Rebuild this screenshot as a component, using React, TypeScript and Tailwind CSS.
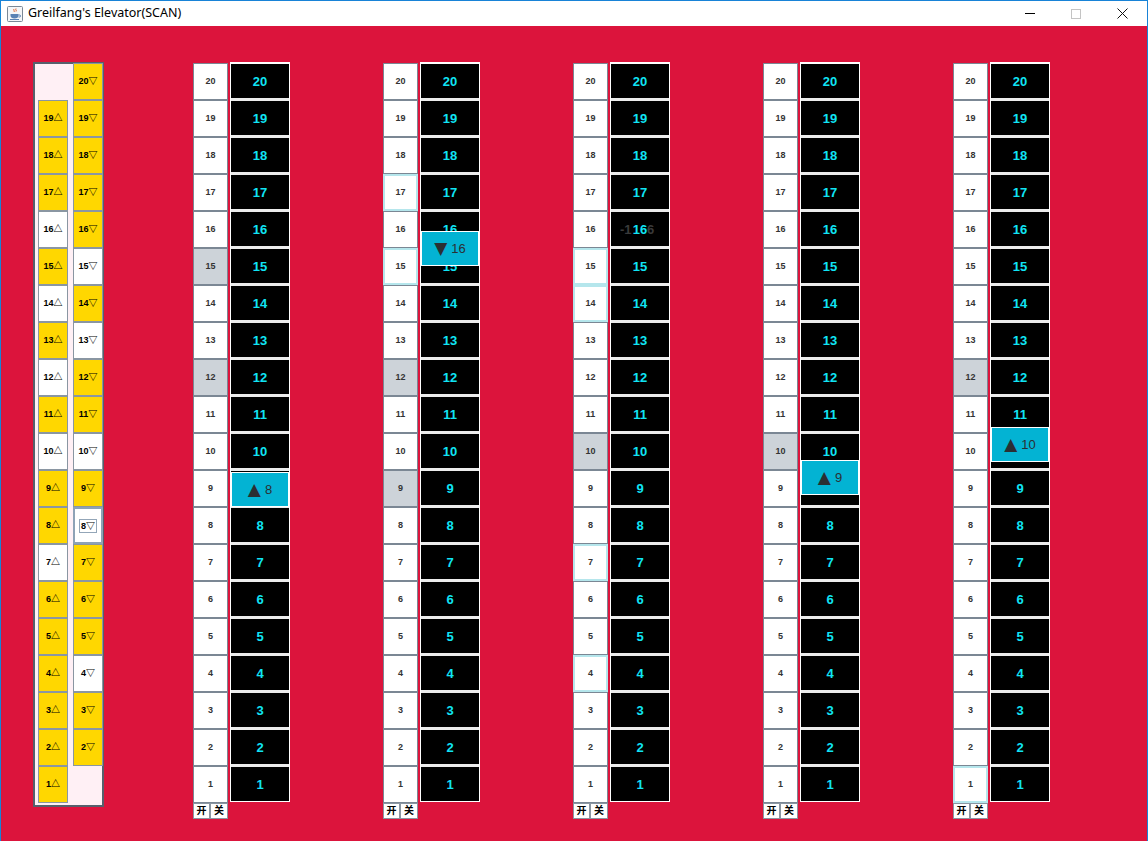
import React from "react";

const FLOORS = Array.from({ length: 20 }, (_, i) => 20 - i);

// 1 = lit (yellow), 0 = idle (white)
const upLit: Record<number, number> = {
  19: 1, 18: 1, 17: 1, 16: 0, 15: 1, 14: 0, 13: 1, 12: 0, 11: 1, 10: 0,
  9: 1, 8: 1, 7: 0, 6: 1, 5: 1, 4: 1, 3: 1, 2: 1, 1: 1,
};
const downLit: Record<number, number> = {
  20: 1, 19: 1, 18: 1, 17: 1, 16: 1, 15: 0, 14: 1, 13: 0, 12: 1, 11: 1,
  10: 0, 9: 1, 8: 2, 7: 1, 6: 1, 5: 1, 4: 0, 3: 1, 2: 1,
};

interface Elevator {
  pressed: number[];
  focused: number[];
  car?: { top: number; dir: string; floor: number };
  glitch?: number;
}

const elevators: Elevator[] = [
  { pressed: [15, 12], focused: [], car: { top: 408, dir: "▲", floor: 8 } },
  { pressed: [12, 9], focused: [17, 15], car: { top: 167, dir: "▼", floor: 16 } },
  { pressed: [10], focused: [15, 14, 7, 4], glitch: 16 },
  { pressed: [10], focused: [], car: { top: 396, dir: "▲", floor: 9 } },
  { pressed: [12], focused: [1], car: { top: 363, dir: "▲", floor: 10 } },
];

function JavaIcon() {
  return (
    <svg width="16" height="16" viewBox="0 0 16 16">
      <rect x="0.5" y="0.5" width="15" height="15" rx="1" fill="#f4f6f8" stroke="#7a8896" />
      <path d="M7 3c-1 1 1 2 0 3M9 2.5c-1 1 1 2 0 3" stroke="#e0602a" strokeWidth="1" fill="none" />
      <path d="M3.5 8h8v1.5c0 2-1.5 3-4 3s-4-1-4-3z" fill="#5a82b4" />
      <path d="M11.5 9h1a1 1 0 010 2h-1" stroke="#5a82b4" fill="none" />
      <rect x="3" y="13" width="9" height="1" fill="#5a82b4" />
    </svg>
  );
}

function HallPanel() {
  return (
    <div className="flex h-[745px] w-[71px] shrink-0 border-2 border-[#56606c] bg-[#FFF0F5] pl-[3px]">
      <div className="-mt-[1px] flex w-[30px] flex-col">
        <div className="h-[37px]" />
        {FLOORS.slice(1).map((f) => (
          <div
            key={f}
            className={`flex h-[37px] items-center justify-center border border-[#8a96a2] text-[9px] font-bold text-black ${
              upLit[f] ? "bg-[#FFD700]" : "bg-white"
            }`}
          >
            {f}△
          </div>
        ))}
      </div>
      <div className="-mt-[1px] ml-[5px] -mr-[1px] flex w-[30px] flex-col">
        {FLOORS.slice(0, 19).map((f) =>
          downLit[f] === 2 ? (
            <div
              key={f}
              className="flex h-[37px] items-center justify-center border-2 border-[#8ea2b6] bg-white text-[9px] font-bold text-black"
            >
              <span className="border border-[#93a6b8] px-[1px] leading-[12px]">{f}▽</span>
            </div>
          ) : (
            <div
              key={f}
              className={`flex h-[37px] items-center justify-center border border-[#8a96a2] text-[9px] font-bold text-black ${
                downLit[f] ? "bg-[#FFD700]" : "bg-white"
              }`}
            >
              {f}▽
            </div>
          )
        )}
      </div>
    </div>
  );
}

function Car({ e }: { e: Elevator }) {
  const car = e.car!;
  return (
    <div
      className="absolute left-0 right-0 flex h-[35px] items-center justify-center gap-[4px] border border-white bg-[#03b3d3] text-[13px] font-medium text-[#2b2f33]"
      style={{ top: car.top }}
    >
      <span className="text-[17px] leading-none" style={{ fontFamily: '"DejaVu Sans", sans-serif' }}>
        {car.dir}
      </span>
      <span>{car.floor}</span>
    </div>
  );
}

function ElevatorColumn({ e }: { e: Elevator }) {
  return (
    <div className="flex w-[97px] shrink-0 items-start gap-[2px]">
      <div className="mt-[1px] flex w-[35px] flex-col">
        {FLOORS.map((f) => {
          const pressed = e.pressed.includes(f);
          const focused = e.focused.includes(f);
          return (
            <div
              key={f}
              className={`flex h-[37px] items-center justify-center text-[9px] font-semibold text-[#333] ${
                focused ? "border-2 border-[#b5e6ec]" : "border border-[#7b8794]"
              } ${pressed ? "bg-[#cdd3d9]" : "bg-white"}`}
            >
              {f}
            </div>
          );
        })}
        <div className="flex h-[16px]">
          <div className="flex w-[17px] items-center justify-center border border-[#8a96a2] bg-white text-[10px] font-bold leading-none text-black">
            开
          </div>
          <div className="flex w-[18px] items-center justify-center border border-[#8a96a2] bg-white text-[10px] font-bold leading-none text-black">
            关
          </div>
        </div>
      </div>
      <div className="relative flex w-[60px] flex-col gap-[3px] border border-t-2 border-white bg-[#ececec]">
        {FLOORS.map((f) => (
          <div
            key={f}
            className="relative flex h-[34px] items-center justify-center bg-black pt-[1px] text-[13px] font-bold text-[#10e4f4]"
          >
            {e.glitch === f && (
              <>
                <span className="absolute left-[9px] text-[#3a3a3a]">-1</span>
                <span className="absolute left-[36px] text-[#3a3a3a]">6</span>
              </>
            )}
            <span className="relative">{f}</span>
          </div>
        ))}
        {e.car && <Car e={e} />}
      </div>
    </div>
  );
}

export default function App() {
  return (
    <div
      className="flex h-[841px] w-[1148px] flex-col overflow-hidden border-x border-t border-[#1883d7] bg-white"
      style={{ fontFamily: '"Liberation Sans", "Noto Sans CJK SC", sans-serif' }}
    >
      {/* Title bar */}
      <div className="flex h-[25px] shrink-0 items-center bg-white">
        <div className="ml-[6px] flex items-center">
          <JavaIcon />
        </div>
        <span className="ml-[5px] text-[12.5px] text-black" style={{ fontFamily: '"Noto Sans", sans-serif' }}>
          Greilfang's Elevator(SCAN)
        </span>
        <div className="ml-auto flex h-full items-center">
          <div className="flex w-[46px] justify-center">
            <div className="h-[1px] w-[10px] bg-black" />
          </div>
          <div className="flex w-[46px] justify-center">
            <div className="h-[10px] w-[10px] border border-[#c4c4c4]" />
          </div>
          <div className="flex w-[46px] justify-center">
            <svg width="11" height="11" viewBox="0 0 11 11">
              <path d="M0.5 0.5l10 10M10.5 0.5l-10 10" stroke="#111" strokeWidth="1" />
            </svg>
          </div>
          <div className="w-[2px]" />
        </div>
      </div>

      {/* Content */}
      <div className="flex flex-1 items-start bg-[#DC143C] pl-[32px] pt-[36px]">
        <HallPanel />
        <div className="ml-[89px] flex gap-[93px]">
          {elevators.map((e, i) => (
            <ElevatorColumn key={i} e={e} />
          ))}
        </div>
      </div>
    </div>
  );
}
